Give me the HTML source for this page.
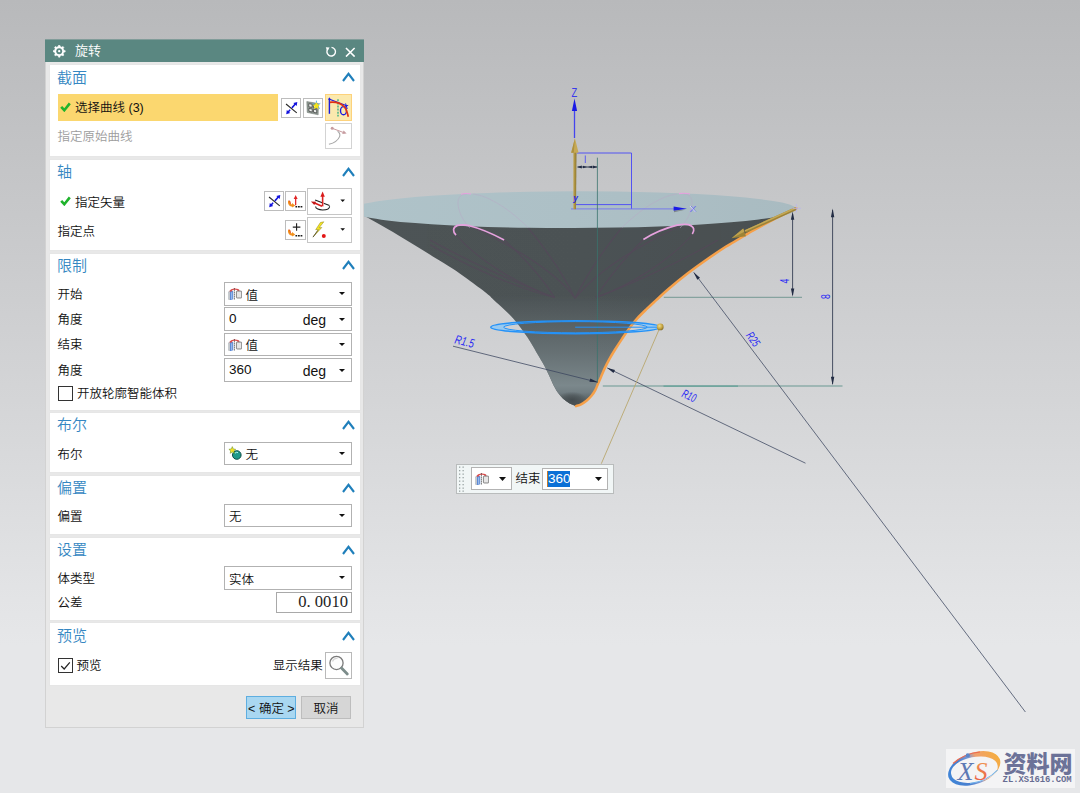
<!DOCTYPE html>
<html lang="zh-CN">
<head>
<meta charset="utf-8">
<title>旋转</title>
<style>
*{box-sizing:border-box;margin:0;padding:0}
html,body{width:1080px;height:793px;overflow:hidden}
body{position:relative;font-family:"Liberation Sans","Noto Sans CJK SC",sans-serif;font-size:12.5px;color:#111;font-weight:350;
background:linear-gradient(180deg,#b8b9bb 0px,#c6c7c9 200px,#d4d5d7 400px,#e3e4e6 600px,#e6e7e9 645px,#e6e7e9 793px)}
.abs{position:absolute}
#scene{position:absolute;left:0;top:0;width:1080px;height:793px}
/* dialog */
#dlg{position:absolute;left:45px;top:39.5px;width:319.3px;height:688px;background:#e8e8e8;border:1px solid #d2d2d2;border-top:none}
#title{position:absolute;left:45px;top:39px;width:319.3px;height:22.6px;background:linear-gradient(180deg,rgba(90,135,129,.6) 0,rgba(90,135,129,.6) 1px,#5a8781 1px);color:#fff;font-size:13px;line-height:22px}
#title span{position:absolute;left:30px;top:.5px}
.sec{position:absolute;left:50px;width:310px;background:#fff;box-shadow:0 0 0 1px #e6e6e6}
.hd{position:absolute;left:57px;font-size:15px;color:#3587c2;line-height:20px;height:20px}
.lb{position:absolute;left:57.5px;line-height:18px;height:18px;white-space:nowrap}
.chev{position:absolute;left:342px;width:13px;height:10px}
.combo{position:absolute;left:224px;width:128px;height:23.7px;background:#fff;border:1px solid #b2b2b2}
.combo .t{position:absolute;left:4px;top:1.2px;line-height:20.7px;font-size:13.5px;white-space:nowrap}
.combo .c{position:absolute;left:20.5px;top:2.7px;line-height:20.7px;font-size:12.5px}
.combo .u{position:absolute;left:77.8px;top:2.1px;line-height:20.7px;font-size:14px}
.combo:after{content:"";position:absolute;right:6.2px;top:9.5px;border-left:3.2px solid transparent;border-right:3.2px solid transparent;border-top:3.3px solid #111}
.ib{position:absolute;width:20.2px;height:20.2px;background:#fff;border:1px solid #bdbdbd}
.ibw{position:absolute;width:27px;height:26.5px;background:#fff;border:1px solid #c6c6c6}
.cb{position:absolute;width:14.6px;height:14.6px;background:#fff;border:1px solid #333}
.btn{position:absolute;height:23px;line-height:24px;text-align:center;font-size:12.5px;border:1px solid #bdbdbd;background:#d6d6d6}
</style>
</head>
<body>
<svg id="scene" width="1080" height="793" viewBox="0 0 1080 793">
<defs>
<linearGradient id="gBody" gradientUnits="userSpaceOnUse" x1="365" y1="0" x2="800" y2="0">
<stop offset="0" stop-color="#4d5456"/><stop offset=".5" stop-color="#4c5355"/><stop offset="1" stop-color="#494f51"/>
</linearGradient>
<linearGradient id="gLow" gradientUnits="userSpaceOnUse" x1="0" y1="296" x2="0" y2="408">
<stop offset="0" stop-color="#7c898d" stop-opacity="0"/><stop offset=".14" stop-color="#7c898d" stop-opacity=".14"/><stop offset=".28" stop-color="#7c898d" stop-opacity=".3"/><stop offset=".5" stop-color="#7c898d" stop-opacity=".54"/><stop offset=".68" stop-color="#7d8a8e" stop-opacity=".78"/><stop offset=".8" stop-color="#7f8c90" stop-opacity=".93"/><stop offset=".86" stop-color="#78858a" stop-opacity=".85"/><stop offset=".93" stop-color="#5d676a" stop-opacity=".7"/><stop offset="1" stop-color="#434a4c" stop-opacity=".7"/>
</linearGradient>
<linearGradient id="gEdge" gradientUnits="userSpaceOnUse" x1="520" y1="0" x2="640" y2="0">
<stop offset="0" stop-color="#4a5153" stop-opacity="0"/><stop offset=".55" stop-color="#4a5153" stop-opacity="0"/><stop offset="1" stop-color="#4a5153" stop-opacity=".5"/>
</linearGradient>
<radialGradient id="gSh" gradientUnits="userSpaceOnUse" cx="0" cy="0" r="1" gradientTransform="translate(572 400) scale(15 8.5)">
<stop offset="0" stop-color="#40474a" stop-opacity=".85"/><stop offset=".55" stop-color="#444b4e" stop-opacity=".5"/><stop offset="1" stop-color="#454c4e" stop-opacity="0"/>
</radialGradient>
<linearGradient id="gTop" gradientUnits="userSpaceOnUse" x1="350" y1="0" x2="796" y2="0">
<stop offset="0" stop-color="#afc3c9"/><stop offset=".5" stop-color="#adc0c6"/><stop offset="1" stop-color="#a9bbc1"/>
</linearGradient>
<linearGradient id="gGold" x1="0" y1="0" x2="1" y2="0"><stop offset="0" stop-color="#bfa24e"/><stop offset=".5" stop-color="#a88f3f"/><stop offset="1" stop-color="#8a7430"/></linearGradient>
<radialGradient id="gBall" cx=".4" cy=".35" r=".7"><stop offset="0" stop-color="#f0dc8c"/><stop offset=".6" stop-color="#c3a23f"/><stop offset="1" stop-color="#7f6622"/></radialGradient>
<clipPath id="cBody"><path d="M350.00 209.50 C352.38 210.60 359.48 213.67 364.30 216.10 C369.12 218.53 373.32 220.95 378.90 224.10 C384.48 227.25 391.48 231.28 397.80 235.00 C404.12 238.72 410.48 242.53 416.80 246.40 C423.12 250.27 429.83 254.55 435.70 258.20 C441.57 261.85 446.65 264.78 452.00 268.30 C457.35 271.82 462.00 275.10 467.80 279.30 C473.60 283.50 482.47 290.05 486.80 293.50 C491.13 296.95 490.90 297.33 493.80 300.00 C496.70 302.67 500.88 306.35 504.20 309.50 C507.52 312.65 510.87 315.75 513.70 318.90 C516.53 322.05 518.85 325.25 521.20 328.40 C523.55 331.55 526.08 335.23 527.80 337.80 C529.52 340.37 529.87 341.07 531.50 343.80 C533.13 346.53 535.48 350.58 537.60 354.20 C539.72 357.82 542.32 362.03 544.20 365.50 C546.08 368.97 547.48 372.00 548.90 375.00 C550.32 378.00 551.28 380.67 552.70 383.50 C554.12 386.33 555.67 389.47 557.40 392.00 C559.13 394.53 561.05 396.80 563.10 398.70 C565.15 400.60 567.55 402.18 569.70 403.40 C571.85 404.62 574.95 405.57 576.00 406.00 C576.85 405.80 579.30 405.23 581.10 404.30 C582.90 403.37 585.07 401.92 586.80 400.50 C588.53 399.08 590.08 397.53 591.50 395.80 C592.92 394.07 594.20 392.15 595.30 390.10 C596.40 388.05 597.15 385.70 598.10 383.50 C599.05 381.30 599.90 379.42 601.00 376.90 C602.10 374.38 603.28 371.40 604.70 368.40 C606.12 365.40 607.77 362.05 609.50 358.90 C611.23 355.75 612.98 352.88 615.10 349.50 C617.22 346.12 619.77 342.22 622.20 338.60 C624.63 334.98 627.18 331.17 629.70 327.80 C632.22 324.43 634.45 321.55 637.30 318.40 C640.15 315.25 643.65 311.93 646.80 308.90 C649.95 305.87 652.58 303.52 656.20 300.20 C659.82 296.88 663.23 293.48 668.50 289.00 C673.77 284.52 681.42 278.22 687.80 273.30 C694.18 268.38 700.48 263.92 706.80 259.50 C713.12 255.08 721.18 249.72 725.70 246.80 C730.22 243.88 729.38 244.68 733.90 242.00 C738.42 239.32 746.48 234.32 752.80 230.70 C759.12 227.08 765.48 223.60 771.80 220.30 C778.12 217.00 786.60 212.88 790.70 210.90 C794.80 208.92 795.45 208.82 796.40 208.40 L573 205 Z"/></clipPath>
</defs>

<!-- ring fill (hidden by body where inside) -->
<path fill-rule="evenodd" d="M490.8 327.2a84.6 6.5 0 1 0 169.2 0a84.6 6.5 0 1 0 -169.2 0zM503.6 327.2a71.8 5.6 0 1 0 143.6 0a71.8 5.6 0 1 0 -143.6 0z" fill="#86c8fb" opacity=".75"/>
<!-- revolved body -->
<path d="M350.00 209.50 C352.38 210.60 359.48 213.67 364.30 216.10 C369.12 218.53 373.32 220.95 378.90 224.10 C384.48 227.25 391.48 231.28 397.80 235.00 C404.12 238.72 410.48 242.53 416.80 246.40 C423.12 250.27 429.83 254.55 435.70 258.20 C441.57 261.85 446.65 264.78 452.00 268.30 C457.35 271.82 462.00 275.10 467.80 279.30 C473.60 283.50 482.47 290.05 486.80 293.50 C491.13 296.95 490.90 297.33 493.80 300.00 C496.70 302.67 500.88 306.35 504.20 309.50 C507.52 312.65 510.87 315.75 513.70 318.90 C516.53 322.05 518.85 325.25 521.20 328.40 C523.55 331.55 526.08 335.23 527.80 337.80 C529.52 340.37 529.87 341.07 531.50 343.80 C533.13 346.53 535.48 350.58 537.60 354.20 C539.72 357.82 542.32 362.03 544.20 365.50 C546.08 368.97 547.48 372.00 548.90 375.00 C550.32 378.00 551.28 380.67 552.70 383.50 C554.12 386.33 555.67 389.47 557.40 392.00 C559.13 394.53 561.05 396.80 563.10 398.70 C565.15 400.60 567.55 402.18 569.70 403.40 C571.85 404.62 574.95 405.57 576.00 406.00 C576.85 405.80 579.30 405.23 581.10 404.30 C582.90 403.37 585.07 401.92 586.80 400.50 C588.53 399.08 590.08 397.53 591.50 395.80 C592.92 394.07 594.20 392.15 595.30 390.10 C596.40 388.05 597.15 385.70 598.10 383.50 C599.05 381.30 599.90 379.42 601.00 376.90 C602.10 374.38 603.28 371.40 604.70 368.40 C606.12 365.40 607.77 362.05 609.50 358.90 C611.23 355.75 612.98 352.88 615.10 349.50 C617.22 346.12 619.77 342.22 622.20 338.60 C624.63 334.98 627.18 331.17 629.70 327.80 C632.22 324.43 634.45 321.55 637.30 318.40 C640.15 315.25 643.65 311.93 646.80 308.90 C649.95 305.87 652.58 303.52 656.20 300.20 C659.82 296.88 663.23 293.48 668.50 289.00 C673.77 284.52 681.42 278.22 687.80 273.30 C694.18 268.38 700.48 263.92 706.80 259.50 C713.12 255.08 721.18 249.72 725.70 246.80 C730.22 243.88 729.38 244.68 733.90 242.00 C738.42 239.32 746.48 234.32 752.80 230.70 C759.12 227.08 765.48 223.60 771.80 220.30 C778.12 217.00 786.60 212.88 790.70 210.90 C794.80 208.92 795.45 208.82 796.40 208.40 L573 205 Z" fill="url(#gBody)"/>
<g clip-path="url(#cBody)">
<rect x="480" y="290" width="190" height="120" fill="url(#gLow)"/>
<rect x="550" y="388" width="50" height="22" fill="url(#gSh)"/>
<!-- faint petal curves on the body -->
<g fill="none" stroke="#57475b" stroke-width="1.1" opacity=".7">
<path d="M456 235.2C480 262 520 285 554.6 297.5"/>
<path d="M504 240C525 258 542 278 554.6 297.5"/>
<path d="M430 240C470 262 520 285 554.6 297.5"/>
<path d="M430 244.7C470 268 520 289 554.6 297.5"/>
<path d="M470 226C510 245 555 270 575.1 298.3"/>
<path d="M527.8 227.3C545 248 562 272 575.1 298.3"/>
<path d="M692 235C668 262 630 285 596 297.5"/>
<path d="M643 240C625 258 608 278 596 297.5"/>
<path d="M718 240C680 262 630 285 596 297.5"/>
<path d="M680 226C640 245 598 270 575.1 298.3"/>
<path d="M622 227.3C605 248 588 272 575.1 298.3"/>
</g>
</g>
<!-- top face -->
<ellipse cx="573" cy="209.1" rx="223.3" ry="18.4" transform="rotate(-.15 796 208)" fill="url(#gTop)"/>

<!-- faint petals on the top face -->
<g fill="none" stroke="#b9a9c6" stroke-width=".9" opacity=".55">
<path d="M466.3 193.9C458 194 455 202 461.5 216.3C464 221 467 225 470 228"/>
<path d="M472.6 193.9C490 196 510 210 527.8 227.3"/>
<path d="M683.7 193.9C692 194 695 202 688.5 216.3C686 221 683 225 680 228"/>
<path d="M677.4 193.9C660 196 640 210 622.2 227.3"/>
</g>
<!-- pink arcs -->
<path d="M456 235.2C452.6 231.5 452.4 227.5 457.6 225.4C461 224.4 465 224.8 469.4 225.7C481 228.6 493 234 504.1 239.9" fill="none" stroke="#e6a1de" stroke-width="1.7"/>
<path d="M692.3 233.9C694.8 230.5 694.6 226.6 688.4 224.6C685 223.8 681 224.4 677.3 225.2C665 228.2 653 233.6 643.4 239.4" fill="none" stroke="#e6a1de" stroke-width="1.7"/>
<path d="M461 194.2C464 193.4 468 193.4 471 194" fill="none" stroke="#e6a1de" stroke-width="1.1"/>
<path d="M679 193.6C683 193 687 193.2 690 194" fill="none" stroke="#e6a1de" stroke-width="1.1"/>

<!-- orange selected curve -->
<path d="M576.00 406.10 C576.85 405.80 579.30 405.23 581.10 404.30 C582.90 403.37 585.07 401.92 586.80 400.50 C588.53 399.08 590.08 397.53 591.50 395.80 C592.92 394.07 594.20 392.15 595.30 390.10 C596.40 388.05 597.15 385.70 598.10 383.50 C599.05 381.30 599.90 379.42 601.00 376.90 C602.10 374.38 603.28 371.40 604.70 368.40 C606.12 365.40 607.77 362.05 609.50 358.90 C611.23 355.75 612.98 352.88 615.10 349.50 C617.22 346.12 619.77 342.22 622.20 338.60 C624.63 334.98 627.18 331.17 629.70 327.80 C632.22 324.43 634.45 321.55 637.30 318.40 C640.15 315.25 643.65 311.93 646.80 308.90 C649.95 305.87 652.58 303.52 656.20 300.20 C659.82 296.88 663.23 293.48 668.50 289.00 C673.77 284.52 681.42 278.22 687.80 273.30 C694.18 268.38 700.48 263.92 706.80 259.50 C713.12 255.08 721.18 249.72 725.70 246.80 C730.22 243.88 729.38 244.68 733.90 242.00 C738.42 239.32 746.48 234.32 752.80 230.70 C759.12 227.08 765.48 223.60 771.80 220.30 C778.12 217.00 786.60 212.88 790.70 210.90 C794.80 208.92 795.45 208.82 796.40 208.40" fill="none" stroke="#f6a049" stroke-width="2.5" stroke-linecap="round"/>

<!-- sketch rectangle & axes -->
<g fill="none" stroke="#5252f2" stroke-width=".9">
<path d="M577 153H631.5V208.9M631.5 204.6H575.5" stroke-width="1"/>
<path d="M571 208.9H675" stroke="#6a6af4" stroke-width=".8"/>
<path d="M574.5 108V138" stroke="#4444ee" stroke-width="1.3"/>
</g>
<path d="M574.5 98.5l2.6 12.4h-5.2z" fill="#1a1ae6"/>
<path d="M687 208.7l-13.4-2.2v4.2z" fill="#1a1ae6"/>
<path d="M686 209.6l-12 2.6v-1.4z" fill="#555" opacity=".55"/>
<text transform="translate(571.6 96.6) scale(.78 1)" font-family="Liberation Sans,sans-serif" font-size="12" fill="#3a3aec">Z</text>
<text transform="translate(689.6 212) scale(1 .8)" font-family="Liberation Sans,sans-serif" font-size="10.5" fill="#6a6af4">X</text>
<path d="M690 206l5.5 6" stroke="#eeeeee" stroke-width="1" opacity=".8"/>

<!-- teal construction lines -->
<path d="M597.4 157.7V382.5" stroke="#3a746e" stroke-width=".8"/>
<path d="M663.8 297.4H802" stroke="#86a39f" stroke-width="1.2"/>
<path d="M602.8 386.1H842.5" stroke="#8dada8" stroke-width="1.5"/>
<path d="M663.5 386.1H738" stroke="#62a097" stroke-width="1.3"/>

<!-- small dimension "1" -->
<path d="M577.5 167H597" fill="none" stroke="#222c44" stroke-width=".9"/>
<path d="M577.2 167l4.6-1.5v3zM597.4 167l-4.6-1.5v3zM587 167l-4-1.3v2.6zM588 167l4-1.3v2.6z" fill="#222c44"/>
<path d="M585.3 155.5V163" stroke="#5252f2" stroke-width=".9"/>

<!-- dimensions 4 and 8 -->
<g stroke="#222c44" fill="#222c44">
<path d="M792.6 214V295" stroke-width=".8" fill="none"/>
<path d="M792.6 211.5l1.7 8.2h-3.4zM792.6 296.8l1.7-8.2h-3.4z" stroke="none"/>
<path d="M832.6 210V384" stroke-width=".8" fill="none"/>
<path d="M832.6 208.6l1.7 8.6h-3.4zM832.6 385.3l1.7-8.6h-3.4z" stroke="none"/>
</g>
<text transform="translate(789.2 283.6) rotate(-90) scale(.72 1)" font-family="Liberation Sans,sans-serif" font-size="12" fill="#2a2af4">4</text>
<text transform="translate(829.6 298.9) rotate(-90) scale(.72 1)" font-family="Liberation Sans,sans-serif" font-size="12" fill="#2a2af4">8</text>

<!-- radius leaders -->
<g stroke="#39445e" stroke-width=".75" fill="none">
<path d="M453 346.2L597.5 382.2"/>
<path d="M607.3 368L805.5 463.2"/>
<path d="M693.8 272.4L1025.4 712"/>
</g>
<path d="M597.8 382.3l-8.4-.5.9-3.2z" fill="#222c44"/>
<path d="M607 367.8l8 2.2-1.5 3z" fill="#222c44"/>
<path d="M693.6 272.2l6.4 5.5-2.7 2z" fill="#222c44"/>
<text transform="translate(454 343.2) rotate(14) scale(.74 1)" font-family="Liberation Sans,sans-serif" font-size="12.5" font-style="italic" fill="#2a2af4">R1.5</text>
<text transform="translate(681 396.5) rotate(25) scale(.64 1)" font-family="Liberation Sans,sans-serif" font-size="12" font-style="italic" fill="#2a2af4">R10</text>
<text transform="translate(745.6 335.6) rotate(55) scale(.66 1)" font-family="Liberation Sans,sans-serif" font-size="12" font-style="italic" fill="#2a2af4">R25</text>

<!-- blue preview ring -->
<g fill="none" stroke="#2492f8">
<ellipse cx="575.4" cy="327.2" rx="84.6" ry="6.5" stroke-width="1.5"/>
<ellipse cx="575.4" cy="327.2" rx="71.8" ry="5.6" stroke-width="1"/>
<path d="M575.2 327.2H657" stroke-width="1"/>
</g>

<!-- gold handle line, ball and arrows -->
<path d="M660.2 327L601.3 463.7" stroke="#b9a76e" stroke-width=".9"/>
<circle cx="660.2" cy="326.9" r="3.4" fill="url(#gBall)"/>
<path d="M573.4 209.2V152h3.1L576 209.2z" fill="url(#gGold)"/>
<path d="M574.9 138.2l3.7 14.6h-7.4z" fill="#c6a955"/><path d="M574.9 138.2l-3.7 14.6h2.6z" fill="#ad9140"/>
<path d="M795.8 207.1L744.6 230.2L745.9 233L797 209.7z" fill="#9c8338"/>
<path d="M795.8 207.1L744.6 230.2L745.2 231.5L796.4 208.4z" fill="#c4a856"/>
<path d="M731.6 238.3L743.2 228.4L746 236.2z" fill="#9d8437"/>
<path d="M731.6 238.3L743.2 228.4L744.4 231.8z" fill="#bfa350"/>
<path d="M796.4 204v8.5M792.5 208.4h8.5" stroke="#b9b4f4" stroke-width=".8" opacity=".8"/>
<text x="573.2" y="201.3" font-family="Liberation Sans,sans-serif" font-size="8.5" font-style="italic" font-weight="bold" fill="#2a2ae8">y</text>
</svg>

<svg width="0" height="0" style="position:absolute">
<defs>
<symbol id="iRev" viewBox="0 0 20 20"><path d="M4.9 5.9L15.4 14.5" stroke="#2a2a2a" stroke-width="1.1"/><path d="M6.6 14.1L14.4 5.4" stroke="#1212dd" stroke-width="1.5" stroke-dasharray="3.4 2.6 20"/><path d="M15.9 3.8l-.6 4.1-3.3-3z" fill="#1212dd"/><path d="M5.1 15.8l.6-4.1 3.3 3z" fill="#1212dd"/></symbol>
<symbol id="iOrg" viewBox="0 0 20 20"><path d="M4 9.6C3.4 12.6 5 14.6 8 14.2" fill="none" stroke="#f2901e" stroke-width="2.1"/><path d="M4 9.2c.8 1 1.4 2 1.2 3.4" fill="none" stroke="#e1401c" stroke-width=".9"/><path d="M10 14.2l-3.2-2.6.2 4.6z" fill="#f2901e"/><path d="M10.2 15.4h1.7M12.7 15.4h1.7M15.2 15.4h1.7" stroke="#1a1a1a" stroke-width="1.5"/></symbol>
<symbol id="iCyl" viewBox="0 0 14 12.4"><path d="M.3 3.9L2 3v9l-1.7-.7z" fill="#cfd2d6" stroke="#9a9fa5" stroke-width=".4"/><path d="M2 3.2C3 2.6 4.4 2.9 5.2 3.3V11.3L2 12.2z" fill="#5c8ad6"/><path d="M3.3 4.2h.9v6.8l-.9.3z" fill="#b4ccf0"/><path d="M1.6 3.5C1.6 -.3 11.4 -.5 11.7 2.7L9.9 3C9.1 1.1 3.7 1.2 3.5 3.7Z" fill="#d94a4a"/><path d="M6.4 .3v12" stroke="#111" stroke-width=".8" stroke-dasharray="1.1 .9"/><rect x="8.4" y="3.1" width="5.3" height="6.9" rx=".7" fill="#e6e6e6" stroke="#6a6a6a" stroke-width=".8"/></symbol>
</defs></svg>
<div id="dlg"></div>
<div id="title">
<svg class="abs" style="left:8.4px;top:6.3px" width="12.4" height="12.4" viewBox="0 0 12.4 12.4"><polygon points="5.13,1.62 5.66,0.17 6.74,0.17 7.27,1.62 8.68,2.21 10.08,1.55 10.85,2.32 10.19,3.72 10.78,5.13 12.23,5.66 12.23,6.74 10.78,7.27 10.19,8.68 10.85,10.08 10.08,10.85 8.68,10.19 7.27,10.78 6.74,12.23 5.66,12.23 5.13,10.78 3.72,10.19 2.32,10.85 1.55,10.08 2.21,8.68 1.62,7.27 0.17,6.74 0.17,5.66 1.62,5.13 2.21,3.72 1.55,2.32 2.32,1.55 3.72,2.21" fill="#fff" stroke="#fff" stroke-width=".6" stroke-linejoin="round"/><circle cx="6.2" cy="6.2" r="2.95" fill="#5a8781"/><circle cx="6.2" cy="6.2" r="1.15" fill="#fff"/></svg>
<span>旋转</span>
<svg class="abs" style="left:280px;top:7px" width="13" height="12" viewBox="0 0 13 12"><path d="M3.2 2.6A4.3 4.3 0 1 0 6.5 1.4" fill="none" stroke="#fff" stroke-width="1.4"/><path d="M0.8 1.2L4.6 1.6L2.2 5Z" fill="#fff"/></svg>
<svg class="abs" style="left:300.2px;top:7.7px" width="10.6" height="10.6" viewBox="0 0 11 11"><path d="M1 1L10 10M10 1L1 10" stroke="#fff" stroke-width="1.6" fill="none"/></svg>
</div>

<!-- section 1 -->
<div class="sec" style="top:65px;height:91px"></div>
<div class="hd" style="top:68px">截面</div>
<svg class="chev" style="top:72px" viewBox="0 0 13 10"><path d="M1 9L6.5 1.8L12 9" fill="none" stroke="#1f7fbb" stroke-width="2.1"/></svg>
<div class="abs" style="left:58px;top:94.3px;width:220px;height:26.4px;background:#fbd76f"></div>
<svg class="abs" style="left:60px;top:102px" width="11" height="10" viewBox="0 0 11 10"><path d="M1.2 4.8L4.3 8.2L9.8 1.4" fill="none" stroke="#1fb32c" stroke-width="2.6"/></svg>
<div class="lb" style="left:75px;top:98.5px">选择曲线 (3)</div>
<div class="ib" style="left:281px;top:98px"><svg class="abs" style="left:-1px;top:-1px" width="20.5" height="20.5"><use href="#iRev"/></svg></div>
<div class="ib" style="left:303px;top:98px"><svg class="abs" style="left:-1px;top:-1px" width="20.5" height="20.5" viewBox="0 0 20 20"><path d="M3.7 3.5L15.1 5.4L14.8 16.4L4.1 14.1z" fill="#8f9a93" stroke="#6d756f" stroke-width=".5"/><path d="M5.6 5.6l3.3.5v3l-3.2-.5zM10.2 6.4l3.3.6-.1 3-3.2-.6zM5.8 10.2l3.2.6v2.9l-3.1-.7zM10.3 11l3.1.6-.1 3-3-.7z" fill="#eef0ee" stroke="#3c3c3c" stroke-width=".7"/><path d="M13.1 3.6l1 2.5 2.6.5-2 1.7.5 2.7-2.2-1.4-2.4 1.3.7-2.6-1.9-1.8 2.6-.3z" fill="#f4e51a"/><path d="M13.1 2.6v2M16.9 5.2l-1.8 1M16.6 10.4l-1.5-1.3M9.4 5.4l1.7.8" stroke="#4bb0e8" stroke-width=".9"/></svg></div>
<div class="ibw" style="left:325px;top:94.3px;background:#fbe9ae;border-color:#fdd27c"><svg class="abs" style="left:-1px;top:-1px" width="27" height="26.5" viewBox="0 0 27 26.5"><path d="M13 5.3V22.5" stroke="#5cba8c" stroke-width="1.7" stroke-dasharray="2 1.1"/><path d="M4.4 4.4V19.8" stroke="#1a1ae0" stroke-width="1.4"/><path d="M4.4 3.2l1.4 2.6H3z" fill="#1a1ae0"/><path d="M4.6 5.2L21.6 11.8" stroke="#1a1ae0" stroke-width="1.2"/><ellipse cx="18.5" cy="16.7" rx="3" ry="4.1" fill="none" stroke="#1a1ae0" stroke-width="1.4"/><path d="M20.6 9.4l1.6 5.6M19.2 12.6l4-1.2" stroke="#1a1ae0" stroke-width="1"/><path d="M4.9 8.3C12 7.8 16.5 9.5 19.6 13.2C21.8 16 22.6 19.5 23.3 22.8" fill="none" stroke="#e23312" stroke-width="1.7"/></svg></div>
<div class="lb" style="top:127.6px;color:#9d9d9d">指定原始曲线</div>
<div class="ibw" style="left:325px;top:122.5px;border-color:#d3d3d3"><svg class="abs" style="left:-1px;top:-1px" width="27" height="26.5" viewBox="0 0 27 26.5"><path d="M3.9 21.3C9 20 13 17.5 14.6 13.6C15.4 11.3 14.3 9.5 12.6 8.3" fill="none" stroke="#a8a8a8" stroke-width="1.1"/><path d="M7.2 5.3L19.5 9.9" stroke="#c79ca0" stroke-width="1"/><circle cx="7.2" cy="5.3" r="1.5" fill="#c79ca0"/><path d="M21.6 10.6l-4.4.4 1.4-3.4z" fill="#c79ca0"/></svg></div>

<!-- section 2 -->
<div class="sec" style="top:160px;height:90px"></div>
<div class="hd" style="top:162px">轴</div>
<svg class="chev" style="top:166.5px" viewBox="0 0 13 10"><path d="M1 9L6.5 1.8L12 9" fill="none" stroke="#1f7fbb" stroke-width="2.1"/></svg>
<svg class="abs" style="left:60px;top:196px" width="11" height="10" viewBox="0 0 11 10"><path d="M1.2 4.8L4.3 8.2L9.8 1.4" fill="none" stroke="#1fb32c" stroke-width="2.6"/></svg>
<div class="lb" style="left:75px;top:193.5px">指定矢量</div>
<div class="ib" style="left:264.2px;top:191.2px"><svg class="abs" style="left:-1px;top:-1px" width="20.5" height="20.5"><use href="#iRev"/></svg></div>
<div class="ib" style="left:285.4px;top:191.2px"><svg class="abs" style="left:-1px;top:-1px" width="20.5" height="20.5" viewBox="0 0 20 20"><path d="M10.4 6.5V14" stroke="#e02525" stroke-width="1.2"/><path d="M10.4 3.8l1.9 3.9H8.5z" fill="#e02525"/><use href="#iOrg"/></svg></div>
<div class="ibw" style="left:307.3px;top:188.4px;width:44.5px;height:26.3px"><svg class="abs" style="left:-1px;top:-1px" width="44.5" height="26.3" viewBox="0 0 44.5 26.3"><path d="M8.6 18.4C8.6 23.2 22.6 23.2 22.6 18.2" fill="none" stroke="#1e1e1e" stroke-width="1.1"/><path d="M8.1 11.9L22.5 17.4" stroke="#1e1e1e" stroke-width="1.1"/><path d="M15.6 18.3V8" stroke="#d91a1a" stroke-width="1.5"/><path d="M16.4 18.3V8" stroke="#f0a0a0" stroke-width=".8"/><path d="M15.6 3.5l2.2 5.2h-4.4z" fill="#d91a1a"/><path d="M15 18.3L7.6 15" stroke="#d91a1a" stroke-width="1.5"/><path d="M3.9 13.4l5.2.3-1.8 3.4z" fill="#c01515"/><path d="M33.4 11.4h4.6l-2.3 2.6z" fill="#111"/></svg></div>
<div class="lb" style="top:222.7px">指定点</div>
<div class="ib" style="left:285.4px;top:220px"><svg class="abs" style="left:-1px;top:-1px" width="20.5" height="20.5" viewBox="0 0 20 20"><path d="M11.3 3.2v7.4M7.6 6.9H15" stroke="#222" stroke-width="1.1"/><use href="#iOrg"/></svg></div>
<div class="ibw" style="left:307.3px;top:217.1px;width:44.5px;height:26.3px"><svg class="abs" style="left:-1px;top:-1px" width="44.5" height="26.3" viewBox="0 0 44.5 26.3"><path d="M16.8 4.8L13.4 5.5L8.7 12.7L11.5 12.4L6 20.1L14.8 10.5L12.1 10.8z" fill="#f6e71f" stroke="#97891a" stroke-width=".55" stroke-linejoin="round"/><path d="M10.9 13.3L6 20.1" stroke="#3a3a3a" stroke-width=".7"/><circle cx="16.8" cy="19" r="2" fill="#e31616"/><path d="M33.4 11.2h4.6l-2.3 2.6z" fill="#111"/></svg></div>

<!-- section 3 -->
<div class="sec" style="top:254px;height:155.5px"></div>
<div class="hd" style="top:255.5px">限制</div>
<svg class="chev" style="top:260px" viewBox="0 0 13 10"><path d="M1 9L6.5 1.8L12 9" fill="none" stroke="#1f7fbb" stroke-width="2.1"/></svg>
<div class="lb" style="top:285.8px">开始</div>
<div class="combo" style="top:281.9px"><svg class="abs" style="left:3.2px;top:5px" width="14" height="12.4"><use href="#iCyl"/></svg><span class="c">值</span></div>
<div class="lb" style="top:310.7px">角度</div>
<div class="combo" style="top:307.3px"><span class="t">0</span><span class="u">deg</span></div>
<div class="lb" style="top:336.2px">结束</div>
<div class="combo" style="top:332.7px"><svg class="abs" style="left:3.2px;top:5px" width="14" height="12.4"><use href="#iCyl"/></svg><span class="c">值</span></div>
<div class="lb" style="top:361.7px">角度</div>
<div class="combo" style="top:358.1px"><span class="t">360</span><span class="u">deg</span></div>
<div class="cb" style="left:58px;top:386px"></div>
<div class="lb" style="left:77px;top:384.5px">开放轮廓智能体积</div>

<!-- section 4 -->
<div class="sec" style="top:413px;height:59px"></div>
<div class="hd" style="top:415px">布尔</div>
<svg class="chev" style="top:420px" viewBox="0 0 13 10"><path d="M1 9L6.5 1.8L12 9" fill="none" stroke="#1f7fbb" stroke-width="2.1"/></svg>
<div class="lb" style="top:445.7px">布尔</div>
<div class="combo" style="top:441.8px"><svg class="abs" style="left:3px;top:3.6px" width="15" height="15" viewBox="0 0 15 15"><circle cx="8.8" cy="9" r="4.3" fill="#1f9a8a" stroke="#0d4d46" stroke-width="1"/><path d="M7 7.2a2.6 2.6 0 0 1 3-.6" stroke="#bff" stroke-width=".9" fill="none"/><path d="M4.3 .6l1 2.3 2.4.4-1.8 1.6.5 2.4-2.1-1.3-2.1 1.3.5-2.4L.9 3.3l2.4-.4z" fill="#f3e12a" stroke="#5a8a1a" stroke-width=".5"/></svg><span class="c">无</span></div>

<!-- section 5 -->
<div class="sec" style="top:476px;height:58px"></div>
<div class="hd" style="top:478px">偏置</div>
<svg class="chev" style="top:482.5px" viewBox="0 0 13 10"><path d="M1 9L6.5 1.8L12 9" fill="none" stroke="#1f7fbb" stroke-width="2.1"/></svg>
<div class="lb" style="top:508.4px">偏置</div>
<div class="combo" style="top:503.7px"><span class="c" style="left:4px">无</span></div>

<!-- section 6 -->
<div class="sec" style="top:537.5px;height:82.5px"></div>
<div class="hd" style="top:540px">设置</div>
<svg class="chev" style="top:544.5px" viewBox="0 0 13 10"><path d="M1 9L6.5 1.8L12 9" fill="none" stroke="#1f7fbb" stroke-width="2.1"/></svg>
<div class="lb" style="top:569.5px">体类型</div>
<div class="combo" style="top:565.9px"><span class="c" style="left:4px">实体</span></div>
<div class="lb" style="top:594.2px">公差</div>
<div class="abs" style="left:276.3px;top:592px;width:75.7px;height:21.2px;background:#fff;border:1px solid #a9a9a9;font-family:'Liberation Serif','Noto Serif CJK SC',serif;font-size:16.6px;line-height:18.4px;color:#1e1e1e;text-align:right;padding-right:3px;white-space:pre">0. 0010</div>

<!-- section 7 -->
<div class="sec" style="top:623.3px;height:62px"></div>
<div class="hd" style="top:626px">预览</div>
<svg class="chev" style="top:630.5px" viewBox="0 0 13 10"><path d="M1 9L6.5 1.8L12 9" fill="none" stroke="#1f7fbb" stroke-width="2.1"/></svg>
<div class="cb" style="left:58px;top:658.3px"><svg class="abs" style="left:1px;top:1.5px" width="11" height="10" viewBox="0 0 11 10"><path d="M1.2 5L4.2 8L9.8 1.4" fill="none" stroke="#222" stroke-width="1.2"/></svg></div>
<div class="lb" style="left:76.5px;top:656.5px">预览</div>
<div class="lb" style="left:272.8px;top:656.5px">显示结果</div>
<div class="ibw" style="left:325.2px;top:652.2px;width:26.8px;height:26.4px;border-color:#b9b9b9"><svg width="24.8" height="24.4" viewBox="0 0 24.8 24.4"><circle cx="10.5" cy="10" r="6.6" fill="#fdfdfd" stroke="#7a7a7a" stroke-width="1.3"/><path d="M6.5 8.5a4.5 4.5 0 0 1 5-3" fill="none" stroke="#d5d5d5" stroke-width="1.2"/><path d="M15.5 15L21.3 21" stroke="#7c8c8a" stroke-width="2.8" stroke-linecap="round"/></svg></div>

<div class="btn" style="left:246.3px;top:695.7px;width:50.2px;background:#a9d7f1;border-color:#5eaee0">&lt; 确定 &gt;</div>
<div class="btn" style="left:301px;top:695.7px;width:49.8px">取消</div>

<div class="abs" style="left:456.3px;top:463.7px;width:157.5px;height:30px;background:#f1f6f6;border:1px solid #b9bcbc"></div>
<svg class="abs" style="left:458px;top:465px" width="8" height="28" viewBox="0 0 8 28"><g fill="#9aa3a3"><rect x="1" y="1.5" width="1.3" height="1.3"/><rect x="4.5" y="1.5" width="1.3" height="1.3"/><rect x="1" y="5" width="1.3" height="1.3"/><rect x="4.5" y="5" width="1.3" height="1.3"/><rect x="1" y="8.5" width="1.3" height="1.3"/><rect x="4.5" y="8.5" width="1.3" height="1.3"/><rect x="1" y="12" width="1.3" height="1.3"/><rect x="4.5" y="12" width="1.3" height="1.3"/><rect x="1" y="15.5" width="1.3" height="1.3"/><rect x="4.5" y="15.5" width="1.3" height="1.3"/><rect x="1" y="19" width="1.3" height="1.3"/><rect x="4.5" y="19" width="1.3" height="1.3"/><rect x="1" y="22.5" width="1.3" height="1.3"/><rect x="4.5" y="22.5" width="1.3" height="1.3"/><rect x="1" y="25.5" width="1.3" height="1.3"/><rect x="4.5" y="25.5" width="1.3" height="1.3"/></g></svg>
<div class="abs" style="left:471px;top:467.3px;width:41px;height:22.8px;background:#fff;border:1px solid #b3b3b3"></div>
<svg class="abs" style="left:474.9px;top:472.7px" width="14" height="12.4"><use href="#iCyl"/></svg>
<svg class="abs" style="left:499px;top:476.5px" width="7" height="4" viewBox="0 0 7 4"><path d="M0 0h7L3.5 4z" fill="#111"/></svg>
<div class="abs" style="left:515.5px;top:470px;font-size:12.5px;line-height:18px">结束</div>
<div class="abs" style="left:542.4px;top:467.8px;width:65.3px;height:22px;background:#fff;border:1px solid #b3b3b3"></div>
<div class="abs" style="left:547px;top:470.5px;width:23px;height:16.4px;background:#0b70d6;color:#fff;font-size:13.5px;line-height:16.4px;border-left:1px solid #c77b2a">360</div>
<svg class="abs" style="left:595.3px;top:476.5px" width="7" height="4" viewBox="0 0 7 4"><path d="M0 0h7L3.5 4z" fill="#111"/></svg>

<div class="abs" style="left:946px;top:749px;width:129px;height:39px;background:#f4f4f5"></div>
<svg class="abs" style="left:946px;top:749px" width="60" height="39" viewBox="0 0 60 39">
<defs><linearGradient id="wg" gradientUnits="userSpaceOnUse" x1="4" y1="34" x2="54" y2="8"><stop offset="0" stop-color="#3f86d8"/><stop offset=".3" stop-color="#4a7fce"/><stop offset=".5" stop-color="#7d9ad6"/><stop offset=".62" stop-color="#f0a070"/><stop offset="1" stop-color="#f5ae3c"/></linearGradient>
<linearGradient id="ws" x1="0" y1="0" x2="0" y2="1"><stop offset="0" stop-color="#f0a050"/><stop offset="1" stop-color="#e8564a"/></linearGradient></defs>
<path fill-rule="evenodd" fill="url(#wg)" d="M2.66 28.71A27.2 15.6 -20 1 0 53.78 10.09A27.2 15.6 -20 1 0 2.66 28.71ZM5.2 25.3A23.6 12.2 -11 1 0 51.5 16.3A23.6 12.2 -11 1 0 5.2 25.3Z"/>
<path d="M7 14.5C14 8 24 4 34 3" fill="none" stroke="#ea6a50" stroke-width="1.2"/>
<path d="M24 34.5C36 33 46 27 51.5 21" fill="none" stroke="#6cb2ec" stroke-width="1.1"/>
<circle cx="21.8" cy="6.4" r="2.1" fill="#5b86c8"/>
<text x="11.5" y="30.5" font-family="Liberation Serif,serif" font-style="italic" font-size="26" fill="#5d7ab4">X</text>
<text x="28.5" y="30.5" font-family="Liberation Serif,serif" font-style="italic" font-size="26" fill="url(#ws)">S</text>
</svg>
<div class="abs" style="left:1003.6px;top:748.6px;font-size:23px;font-weight:900;color:#6c7298;line-height:30px;letter-spacing:0;white-space:nowrap">资料网</div>
<div class="abs" style="left:1002.6px;top:775.2px;font-family:'Liberation Mono',monospace;font-weight:bold;font-size:8.85px;color:#666c92;line-height:11px;white-space:nowrap">ZL.XS1616.COM</div>

</body>
</html>
